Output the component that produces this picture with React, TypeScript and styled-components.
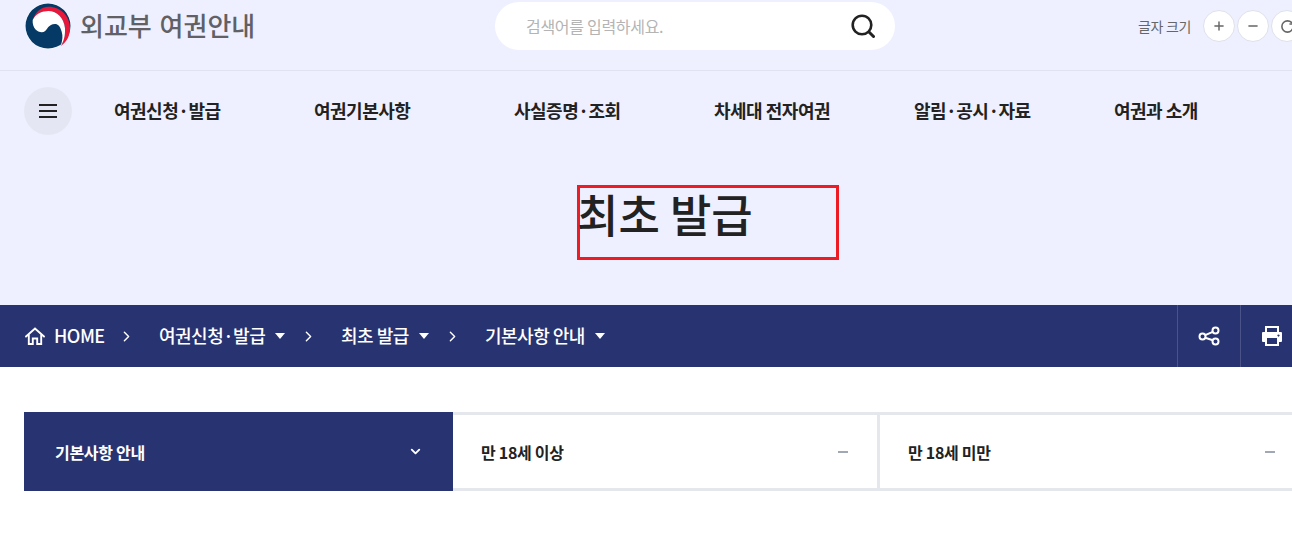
import React from "react"
import styled, { createGlobalStyle } from "styled-components"
import { ChevronDown, ChevronRight, Minus, Plus, RotateCw } from "lucide-react"

const GlobalStyle = createGlobalStyle`
  html, body {
    margin: 0;
    padding: 0;
    background: #fff;
    overflow: hidden;
  }
  * {
    box-sizing: border-box;
  }
  body {
    font-family: "Noto Sans CJK KR", "Noto Sans", sans-serif;
    color: #222;
  }
`

const navItems = ["여권신청·발급", "여권기본사항", "사실증명·조회", "차세대 전자여권", "알림·공시·자료", "여권과 소개"]

const crumbs = [
  { label: "여권신청·발급", width: 182 },
  { label: "최초 발급", width: 144 },
  { label: "기본사항 안내", width: 0 },
]

const Logo = () => (
  <LogoSvg viewBox="0 0 46 46">
    <circle cx="23" cy="23" r="23" fill="#fff" />
    <circle cx="23" cy="23" r="22.5" fill="#063a66" />
    <path d="M8 16.500C10.500 8.500 16.500 3.700 23.500 3.700 36 3.700 45 13.500 45 25.300 45 33 41.500 39.500 35.700 43 39 38 40 32 40 25.300 39 15 32 8 23.500 8 16.500 8 11 11 8 16.500Z" fill="#e8183a" />
    <path d="M7.700 17C10.500 11 16.500 8 23.500 8 32 8 39 15 40 25.300 40.300 33 39 38 35.700 43 37.500 37 38 33 36.700 28.700 35 23 33 21 30 21 26.500 21 25 22.500 23.300 24 21 27.500 19.500 29.300 16.700 29.300 12.500 29.300 7 25 7.700 17Z" fill="#fff" />
  </LogoSvg>
)

const SearchIcon = () => (
  <svg width="24" height="24" viewBox="0 0 24 24" fill="none" stroke="#222" strokeLinecap="round">
    <circle cx="11" cy="11" r="9.300" strokeWidth="2.600" />
    <path d="M18 18 22.500 22.500" strokeWidth="3" />
  </svg>
)

const HomeIcon = () => (
  <HomeSvg viewBox="0 0 20 18" fill="none" stroke="#fff" strokeWidth="1.900">
    <path d="M1 9.500 10 1.500 19 9.500" strokeLinecap="round" />
    <path d="M3.800 7.500V17H7.800V11.500H12.200V17H16.200V7.500" />
  </HomeSvg>
)

const ShareIcon = () => (
  <svg width="22" height="22" viewBox="0 0 22 22" fill="none" stroke="#fff" strokeWidth="2">
    <circle cx="4.500" cy="11.500" r="3" />
    <circle cx="17.500" cy="5.500" r="3" />
    <circle cx="17.500" cy="16.500" r="3" />
    <path d="M7.200 10.200 14.800 6.800M7.200 12.800 14.800 15.200" />
  </svg>
)

const PrintIcon = () => (
  <svg width="20" height="20" viewBox="0 0 20 20" fill="#fff">
    <path fillRule="evenodd" d="M3 0H17V6H19A1 1 0 0 1 20 7V15A1 1 0 0 1 19 16H17V20H3V16H1A1 1 0 0 1 0 15V7A1 1 0 0 1 1 6H3ZM5 2V6H15V2ZM5 12V18H15V12ZM16.500 8.500A1 1 0 1 0 16.501 8.500Z" />
  </svg>
)

const App = () => (
  <Page>
    <GlobalStyle />
    <Hero>
      <TopBar>
        <Brand>
          <Logo />
          <BrandName>외교부 여권안내</BrandName>
        </Brand>
        <SearchBox>
          <SearchHint>검색어를 입력하세요.</SearchHint>
          <SearchIcon />
        </SearchBox>
        <FontSizer>
          <FontLabel>글자 크기</FontLabel>
          <RoundButton><Plus size={14} strokeWidth={2.500} /></RoundButton>
          <RoundButton><Minus size={14} strokeWidth={2.500} /></RoundButton>
          <RoundButton><RotateCw size={15} strokeWidth={2.500} /></RoundButton>
        </FontSizer>
      </TopBar>
      <NavRow>
        <MenuButton>
          <MenuLine />
          <MenuLine />
          <MenuLine />
        </MenuButton>
        <NavList>
          {navItems.map((item) => (
            <NavItem key={item}>{item}</NavItem>
          ))}
        </NavList>
      </NavRow>
      <PageTitle>최초 발급</PageTitle>
    </Hero>
    <CrumbBar>
      <HomeCrumb>
        <HomeIcon />
        <span>HOME</span>
        <Chevron size={17} strokeWidth={2} />
      </HomeCrumb>
      {crumbs.map((crumb) => (
        <Crumb key={crumb.label} $width={crumb.width}>
          <span>{crumb.label}</span>
          <Caret />
          {crumb.width > 0 && <Chevron size={17} strokeWidth={2} />}
        </Crumb>
      ))}
      <CrumbTools>
        <ShareButton><ShareIcon /></ShareButton>
        <PrintButton><PrintIcon /></PrintButton>
      </CrumbTools>
    </CrumbBar>
    <TabRow>
      <ActiveTab>
        기본사항 안내
        <ChevronDown size={15} strokeWidth={3} />
      </ActiveTab>
      <Tab>
        만 18세 이상
        <TabDash />
      </Tab>
      <Tab>
        만 18세 미만
        <TabDash />
      </Tab>
    </TabRow>
  </Page>
)

const Page = styled.div`
  width: 1292px;
  height: 547px;
  overflow: hidden;
  background: #fff;
`

const Hero = styled.div`
  height: 305px;
  background: #eef0ff;
`

const TopBar = styled.header`
  display: flex;
  align-items: flex-start;
  height: 71px;
  padding: 2px 0 0 25px;
  border-bottom: 1px solid #dfe2f0;
  white-space: nowrap;
`

const Brand = styled.div`
  display: flex;
  align-items: center;
  gap: 9px;
  width: 470px;
  height: 48px;
  flex-shrink: 0;
`

const LogoSvg = styled.svg`
  width: 46px;
  height: 46px;
  flex-shrink: 0;
`

const BrandName = styled.span`
  margin-top: -3px;
  font-size: 26px;
  font-weight: 500;
  word-spacing: 2px;
  color: #606065;
`

const SearchBox = styled.div`
  display: flex;
  align-items: center;
  justify-content: space-between;
  width: 400px;
  height: 48px;
  padding: 0 20px 0 31px;
  flex-shrink: 0;
  border-radius: 24px;
  background: #fff;
`

const SearchHint = styled.span`
  margin-top: -1px;
  font-size: 16px;
  letter-spacing: -0.3px;
  color: #b4b4b4;
`

const FontSizer = styled.div`
  display: flex;
  align-items: center;
  gap: 2px;
  height: 48px;
  margin-left: 243px;
  flex-shrink: 0;
`

const FontLabel = styled.span`
  width: 63px;
  margin-top: -1px;
  font-size: 14px;
  letter-spacing: -0.3px;
  color: #666;
`

const RoundButton = styled.span`
  display: flex;
  align-items: center;
  justify-content: center;
  width: 32px;
  height: 32px;
  flex-shrink: 0;
  border: 1px solid #dfe1ea;
  border-radius: 50%;
  background: #fff;
  color: #666;
`

const NavRow = styled.nav`
  display: flex;
  align-items: center;
  height: 80px;
  padding-left: 24px;
`

const MenuButton = styled.span`
  display: flex;
  flex-direction: column;
  align-items: center;
  justify-content: center;
  gap: 4px;
  width: 48px;
  height: 48px;
  flex-shrink: 0;
  border-radius: 50%;
  background: #e4e7f3;
`

const MenuLine = styled.i`
  display: block;
  width: 18px;
  height: 2px;
  background: #222;
`

const NavList = styled.div`
  display: flex;
  margin: -2px 0 0 42px;
`

const NavItem = styled.span`
  width: 200px;
  flex-shrink: 0;
  font-size: 18px;
  font-weight: 700;
  letter-spacing: -0.5px;
  color: #222;
  white-space: nowrap;
`

const PageTitle = styled.h1`
  width: 262px;
  height: 75px;
  margin: 34px 0 0 577px;
  border: 3px solid #ed1c24;
  font-size: 45px;
  font-weight: 500;
  line-height: 52px;
  text-indent: -3px;
  color: #222;
  white-space: nowrap;
`

const CrumbBar = styled.div`
  display: flex;
  align-items: center;
  height: 62px;
  padding-left: 24px;
  background: #283371;
  color: #fff;
  font-size: 18px;
  font-weight: 500;
  letter-spacing: -0.5px;
  white-space: nowrap;
`

const HomeCrumb = styled.div`
  display: flex;
  align-items: center;
  width: 135px;
  flex-shrink: 0;

  span {
    margin: -2px 0 0 9px;
  }
`

const HomeSvg = styled.svg`
  width: 20px;
  height: 18px;
  margin-left: 1px;
`

const Crumb = styled.div<{ $width: number }>`
  display: flex;
  align-items: center;
  width: ${({ $width }) => ($width ? `${$width}px` : "auto")};
  flex-shrink: 0;

  span {
    margin-top: -2px;
  }
`

const Chevron = styled(ChevronRight)`
  margin-left: auto;
  margin-right: 24px;
`

const Caret = styled.i`
  width: 0;
  height: 0;
  margin-left: 10px;
  border-left: 5px solid transparent;
  border-right: 5px solid transparent;
  border-top: 6px solid #fff;
`

const CrumbTools = styled.div`
  display: flex;
  height: 100%;
  margin-left: auto;
  flex-shrink: 0;
`

const ShareButton = styled.span`
  display: flex;
  align-items: center;
  justify-content: center;
  width: 63px;
  height: 100%;
  border-left: 1px solid #4a5488;
`

const PrintButton = styled.span`
  display: flex;
  align-items: center;
  width: 52px;
  height: 100%;
  padding-left: 21px;
  border-left: 1px solid #4a5488;
`

const TabRow = styled.div`
  display: flex;
  height: 79px;
  margin: 45px 0 0 24px;
  font-size: 16px;
  font-weight: 700;
  letter-spacing: -0.3px;
  white-space: nowrap;
`

const ActiveTab = styled.div`
  display: flex;
  align-items: center;
  justify-content: space-between;
  width: 429px;
  padding: 0 30px 0 31px;
  flex-shrink: 0;
  background: #283371;
  color: #fff;
`

const Tab = styled.div`
  display: flex;
  align-items: center;
  justify-content: space-between;
  width: 427px;
  padding: 0 29px 0 28px;
  flex-shrink: 0;
  border-top: 3px solid #e4e7ec;
  border-bottom: 3px solid #e4e7ec;
  border-right: 3px solid #e4e7ec;
  color: #222;
`

const TabDash = styled.i`
  width: 10px;
  height: 2px;
  background: #a2a7b5;
`

export default App
